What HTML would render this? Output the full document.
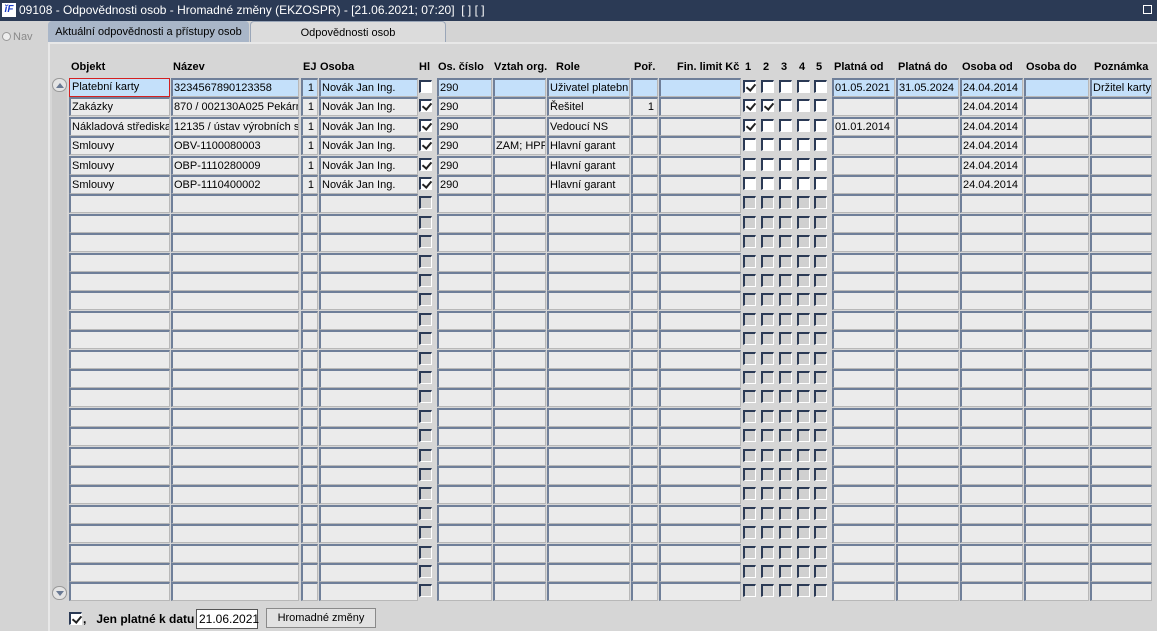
<!DOCTYPE html>
<html><head><meta charset="utf-8"><style>
*{box-sizing:border-box;margin:0;padding:0}
body{width:1157px;height:631px;overflow:hidden;background:#d4d4d4;font-family:"Liberation Sans",Arial,sans-serif;font-size:11px;color:#000;position:relative}
#title{position:absolute;left:0;top:0;width:1157px;height:21px;background:#2b3a55;color:#fff;font-size:12px;line-height:21px;padding-left:19px}
#logo{position:absolute;left:2px;top:3px;width:14px;height:14px;background:#fff;color:#1a3cc8;font:bold italic 10px/14px "Liberation Sans",sans-serif;text-align:center}
#rest{position:absolute;right:5px;top:5px;width:9px;height:9px;border:1px solid #fff}
#nav{position:absolute;left:2px;top:31px;color:#8a8a8a;font-size:11px}
#nav i{display:inline-block;width:9px;height:9px;border-radius:50%;border:1px solid #999;background:#eee;vertical-align:-1px;margin-right:2px}
.tab{position:absolute;top:21px;height:22px;line-height:22px;font-size:11px;text-align:center}
#t1{left:48px;width:201px;background:#a9b6c8;border-radius:4px 4px 0 0}
#t2{left:250px;width:196px;background:#dcdcdc;border:1px solid #9aa6b8;border-bottom:none;border-radius:4px 4px 0 0}
#panel{position:absolute;left:48px;top:42px;width:1109px;height:589px;background:#d6d6d6;border-left:2px solid #e8e8e8;border-top:2px solid #e8e8e8}
.h{position:absolute;top:61px;font-weight:bold;font-size:11px}
.f{position:absolute;height:19px;background:#ebebeb;border-top:2px solid #6f7f99;border-left:2px solid #6f7f99;border-right:1px solid #b8b8b8;border-bottom:1px solid #b8b8b8;line-height:16px;padding-left:1px;white-space:nowrap;overflow:hidden;font-size:11px}
.a .f{background:#c4e0fa}
.r{text-align:right;padding-right:3px}
.c{position:absolute;width:13px;height:13px;background:#d0d0d0;border-top:2px solid #2b3a55;border-left:2px solid #2b3a55;border-right:1px solid #fff;border-bottom:1px solid #fff}
.c.w{background:#fff}
.c.k::after{content:"";position:absolute;left:3px;top:0px;width:4px;height:7px;border-right:2px solid #222;border-bottom:2px solid #222;transform:rotate(40deg)}
#sb{position:absolute;left:52px;top:78px;width:15px;height:522px;background:#cbcbcb;border-radius:7px}
.arr{position:absolute;left:0;width:15px;height:14px;border:1px solid #999;border-radius:7px;background:#e4e4e4}
.arr i{position:absolute;left:3px;width:0;height:0;border-left:4px solid transparent;border-right:4px solid transparent}
.btn{position:absolute;left:266px;top:608px;width:110px;height:20px;border:1px solid #8a8a8a;background:#e2e2e2;text-align:center;line-height:18px;font-size:11px}
</style></head><body>
<div id="title"><div id="logo">ĭF</div>09108 - Odpovědnosti osob - Hromadné změny (EKZOSPR) - [21.06.2021; 07:20] &nbsp;[ ] [ ]<div id="rest"></div></div>
<div id="nav"><i></i>Nav</div>
<div class="tab" id="t1">Aktuální odpovědnosti a přístupy osob</div>
<div class="tab" id="t2">Odpovědnosti osob</div>
<div id="panel"></div>
<div class="h" style="left:71px">Objekt</div>
<div class="h" style="left:173px">Název</div>
<div class="h" style="left:303px">EJ</div>
<div class="h" style="left:320px">Osoba</div>
<div class="h" style="left:419px">Hl</div>
<div class="h" style="left:438px">Os. číslo</div>
<div class="h" style="left:494px">Vztah org.</div>
<div class="h" style="left:556px">Role</div>
<div class="h" style="left:634px">Poř.</div>
<div class="h" style="left:677px">Fin. limit Kč</div>
<div class="h" style="left:745px">1</div><div class="h" style="left:763px">2</div><div class="h" style="left:781px">3</div><div class="h" style="left:799px">4</div><div class="h" style="left:816px">5</div>
<div class="h" style="left:834px">Platná od</div>
<div class="h" style="left:898px">Platná do</div>
<div class="h" style="left:962px">Osoba od</div>
<div class="h" style="left:1026px">Osoba do</div>
<div class="h" style="left:1094px">Poznámka</div>
<div id="sb"><div class="arr" style="top:0"><i style="top:4px;border-bottom:5px solid #6a7a94"></i></div><div class="arr" style="bottom:0"><i style="top:4px;border-top:5px solid #6a7a94"></i></div></div>
<div id="rows"></div>
<div class="c w k" style="left:69px;top:612px"></div>
<div style="position:absolute;left:83px;top:612px;font-weight:bold;font-size:12px">,&nbsp;&nbsp; Jen platné k datu</div>
<div style="position:absolute;left:196px;top:609px;width:62px;height:20px;background:#fff;border:1px solid #555;font-size:12px;line-height:18px;padding-left:2px">21.06.2021</div>
<div class="btn">Hromadné změny</div>
<script>
var data=[
["Platební karty","3234567890123358","1","Novák Jan Ing.",0,"290","","Uživatel platební","","",[1,0,0,0,0],"01.05.2021","31.05.2024","24.04.2014","","Držitel karty"],
["Zakázky","870 / 002130A025 Pekárn","1","Novák Jan Ing.",1,"290","","Řešitel","1","",[1,1,0,0,0],"","","24.04.2014","",""],
["Nákladová střediska","12135 / ústav výrobních s","1","Novák Jan Ing.",1,"290","","Vedoucí NS","","",[1,0,0,0,0],"01.01.2014","","24.04.2014","",""],
["Smlouvy","OBV-1100080003","1","Novák Jan Ing.",1,"290","ZAM; HPP;","Hlavní garant","","",[0,0,0,0,0],"","","24.04.2014","",""],
["Smlouvy","OBP-1110280009","1","Novák Jan Ing.",1,"290","","Hlavní garant","","",[0,0,0,0,0],"","","24.04.2014","",""],
["Smlouvy","OBP-1110400002","1","Novák Jan Ing.",1,"290","","Hlavní garant","","",[0,0,0,0,0],"","","24.04.2014","",""]];
var cols=[[69,101],[171,128],[301,17,1],[319,99],null,[437,55],[493,53],[547,83],[631,27,1],[659,82,1],null,[832,63],[896,63],[960,63],[1024,65],[1090,62]];
var cx=[743,761,779,797,814];
var h="";
for(var i=0;i<27;i++){
 var y=Math.round(78+i*19.4);var d=data[i];
 h+='<div class="'+(i==0?'a':'')+'">';
 for(var j=0;j<cols.length;j++){var c=cols[j];if(!c)continue;
  var t=d?d[j]:"";var st='left:'+c[0]+'px;top:'+y+'px;width:'+c[1]+'px;';
  if(i==0&&j==0)st+='border:1px solid #d42020;padding-left:2px;line-height:17px;';
  h+='<div class="f'+(c[2]?' r':'')+'" style="'+st+'">'+t+'</div>';}
 var cl=d?' w':'';
 h+='<div class="c'+cl+(d&&d[4]?' k':'')+'" style="left:419px;top:'+(y+2)+'px"></div>';
 for(var k=0;k<5;k++)h+='<div class="c'+cl+(d&&d[10][k]?' k':'')+'" style="left:'+cx[k]+'px;top:'+(y+2)+'px"></div>';
 h+='</div>';}
document.getElementById('rows').innerHTML=h;
</script>
</body></html>
